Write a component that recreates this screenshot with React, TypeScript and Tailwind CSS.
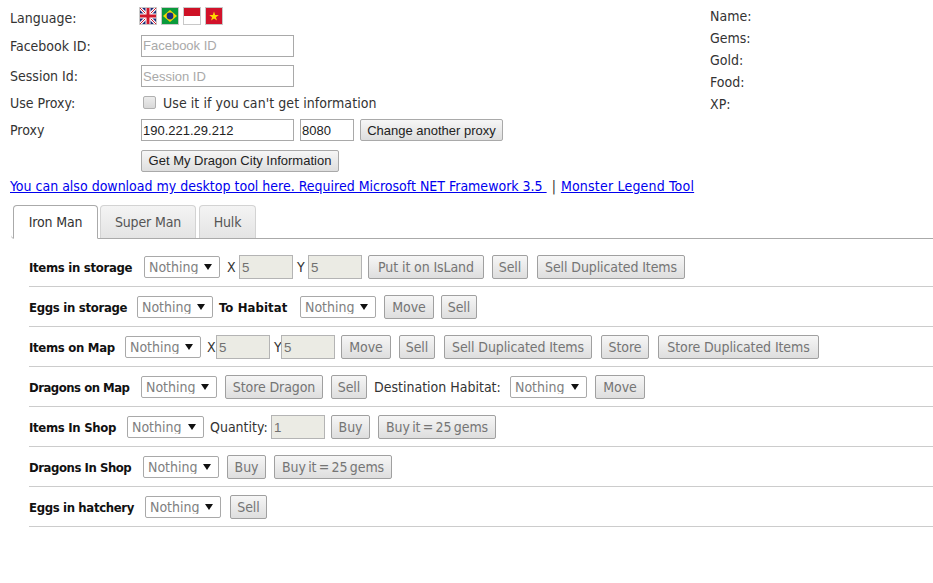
import React from 'react'

const uiFont = "font-['DejaVu_Sans',Tahoma,sans-serif] [font-stretch:condensed]"

function FlagFrame({ children, className = '' }: { children: React.ReactNode; className?: string }) {
  return (
    <span className={`block w-[18px] h-[18px] border border-[#c8c8c8] ${className}`}>
      <svg viewBox="0 0 16 16" className="block w-full h-full">{children}</svg>
    </span>
  )
}

function Flags() {
  return (
    <div className="flex gap-1 -ml-[2px] -mt-[3px]">
      <FlagFrame>
        <rect width="16" height="16" fill="#1f2a78" />
        <path d="M0 0L16 16M16 0L0 16" stroke="#fff" strokeWidth="3" />
        <path d="M0 0L16 16M16 0L0 16" stroke="#d0182c" strokeWidth="1" />
        <path d="M8 0V16M0 8H16" stroke="#fff" strokeWidth="5" />
        <path d="M8 0V16M0 8H16" stroke="#d0182c" strokeWidth="3" />
      </FlagFrame>
      <FlagFrame>
        <rect width="16" height="16" fill="#0a9a3c" />
        <path d="M8 2L15 8L8 14L1 8Z" fill="#f5d800" />
        <circle cx="8" cy="8" r="3.4" fill="#1c2f80" />
      </FlagFrame>
      <FlagFrame>
        <rect width="16" height="8" fill="#ce1126" />
        <rect y="8" width="16" height="8" fill="#fff" />
      </FlagFrame>
      <FlagFrame>
        <rect width="16" height="16" fill="#d2122b" />
        <path d="M8 3.5L9.2 7H12.8L9.9 9.2L11 12.6L8 10.5L5 12.6L6.1 9.2L3.2 7H6.8Z" fill="#ffd800" />
      </FlagFrame>
    </div>
  )
}

function TextBox({ placeholder, value, className = '' }: { placeholder?: string; value?: string; className?: string }) {
  return (
    <input
      readOnly
      placeholder={placeholder}
      defaultValue={value}
      className={`h-[22px] px-px border border-[#a9a9a9] bg-white text-[#222] placeholder:text-[#a9a9a9] font-['Liberation_Sans',Arial,sans-serif] text-[13px] outline-none ${className}`}
    />
  )
}

function DisabledBox({ value, className = '' }: { value: string; className?: string }) {
  return (
    <input
      disabled
      defaultValue={value}
      className={`w-[54px] h-[24px] px-[2px] border border-[#b4b4b4] bg-[#ebebe4] text-[#707070] font-['Liberation_Sans',Arial,sans-serif] text-[13.33px] ${className}`}
    />
  )
}

function NothingSelect({ className = '' }: { className?: string }) {
  return (
    <div className={`relative w-[76px] h-[22px] shrink-0 ${className}`}>
      <select disabled className={`${uiFont} appearance-none w-full h-full pl-[4px] border border-[#a9a9a9] rounded-[2px] bg-white text-[#808080] text-[14px] leading-none`}>
        <option>Nothing</option>
      </select>
      <svg viewBox="0 0 8 6" className="absolute right-[8px] top-[8px] w-[8px] h-[6px]">
        <path d="M0 0H8L4 6Z" fill="#111" />
      </svg>
    </div>
  )
}

function Btn({ children, className = '' }: { children: React.ReactNode; className?: string }) {
  return (
    <button disabled className={`${uiFont} h-[24px] shrink-0 border border-[#a0a0a0] rounded-[2px] bg-gradient-to-b from-[#f6f6f6] to-[#dedede] text-[#757575] text-[14px] leading-none tracking-[-0.1px] whitespace-nowrap ${className}`}>
      {children}
    </button>
  )
}

function TopBtn({ children, className = '' }: { children: React.ReactNode; className?: string }) {
  return (
    <button className={`h-[22px] border border-[#a9a9a9] rounded-[2px] bg-gradient-to-b from-[#f6f6f6] to-[#dedede] text-[#222] font-['Liberation_Sans',Arial,sans-serif] text-[13px] leading-none whitespace-nowrap ${className}`}>
      {children}
    </button>
  )
}

function Label({ children, className = 'tracking-[-0.3px]' }: { children: React.ReactNode; className?: string }) {
  return <span className={`mt-px font-bold text-[13px] text-[#111] whitespace-nowrap shrink-0 ${className}`}>{children}</span>
}

function Row({ children }: { children: React.ReactNode }) {
  return <div className="flex items-center h-[40px] pt-px border-b border-[#cccccc]">{children}</div>
}

function TopRow({ label, height, children }: { label: string; height: string; children?: React.ReactNode }) {
  return (
    <div className={`flex items-center ${height}`}>
      <span className="w-[131px] shrink-0">{label}</span>
      {children}
    </div>
  )
}

export default function App() {
  return (
    <div className={`${uiFont} w-[933px] h-[583px] overflow-hidden bg-white text-[#333] text-[14px] leading-[20px]`}>
      <div className="flex pl-[10px] pt-[5px]">
        <div className="w-[700px] shrink-0">
          <TopRow label="Language:" height="h-[25px]"><Flags /></TopRow>
          <TopRow label="Facebook ID:" height="h-[31px]">
            <TextBox placeholder="Facebook ID" className="w-[153px]" />
          </TopRow>
          <TopRow label="Session Id:" height="h-[30px]">
            <TextBox placeholder="Session ID" className="w-[153px]" />
          </TopRow>
          <TopRow label="Use Proxy:" height="h-[24px]">
            <input type="checkbox" disabled className="appearance-none ml-[2px] -mt-[2px] w-[13px] h-[13px] border border-[#b0b0b0] rounded-[2px] bg-gradient-to-b from-[#ececec] to-[#d8d8d8]" />
            <span className="ml-[7px] tracking-[0.06px]">Use it if you can't get information</span>
          </TopRow>
          <TopRow label="Proxy" height="h-[30px]">
            <TextBox value="190.221.29.212" className="w-[153px]" />
            <TextBox value="8080" className="w-[54px] ml-[6px]" />
            <TopBtn className="ml-[6px] w-[143px]">Change another proxy</TopBtn>
          </TopRow>
          <div className="pl-[131px] h-[31px] flex items-center">
            <TopBtn className="w-[198px]">Get My Dragon City Information</TopBtn>
          </div>
          <div className="h-[20px] flex items-center whitespace-pre">
            <a href="#" className="text-[#0000ee] underline">You can also download my desktop tool here. Required Microsoft NET Framework 3.5 </a>
            <span className="mx-[5px]">|</span>
            <a href="#" className="text-[#0000ee] underline tracking-[0.2px]">Monster Legend Tool</a>
          </div>
        </div>
        <div className="flex flex-col">
          {['Name:', 'Gems:', 'Gold:', 'Food:', 'XP:'].map(t => (
            <div key={t} className="h-[22px] flex items-center">{t}</div>
          ))}
        </div>
      </div>

      {/* tabs */}
      <div className="mt-[9px] ml-[11px] h-[34px] flex items-end gap-[2px] pl-[2px] border-b border-[#aaaaaa] rounded-bl-[4px] tracking-[-0.15px]">
        <div className="w-[85px] h-[34px] -mb-px flex items-center justify-center bg-white border border-b-white border-[#aaaaaa] rounded-t-[4px]">Iron Man</div>
        <div className="w-[96px] h-[33px] flex items-center justify-center border border-b-0 border-[#d3d3d3] rounded-t-[4px] bg-gradient-to-b from-[#f4f4f4] to-[#e4e4e4] text-[#555]">Super Man</div>
        <div className="w-[57px] h-[33px] ml-px flex items-center justify-center border border-b-0 border-[#d3d3d3] rounded-t-[4px] bg-gradient-to-b from-[#f4f4f4] to-[#e4e4e4] text-[#555]">Hulk</div>
      </div>

      <div className="ml-[29px] mt-[8px]">
        <Row>
          <Label className="w-[115px] tracking-[-0.3px]">Items in storage</Label>
          <NothingSelect />
          <span className="ml-[7px] w-[12px]">X</span>
          <DisabledBox value="5" />
          <span className="ml-[4px] w-[11px]">Y</span>
          <DisabledBox value="5" />
          <Btn className="ml-[6px] w-[116px]">Put it on IsLand</Btn>
          <Btn className="ml-[8px] w-[36px]">Sell</Btn>
          <Btn className="ml-[9px] w-[148px]">Sell Duplicated Items</Btn>
        </Row>
        <Row>
          <Label className="w-[108px] tracking-[-0.3px]">Eggs in storage</Label>
          <NothingSelect />
          <Label className="ml-[6px] w-[81px] tracking-[0.1px]">To Habitat</Label>
          <NothingSelect />
          <Btn className="ml-[8px] w-[50px]">Move</Btn>
          <Btn className="ml-[7px] w-[36px]">Sell</Btn>
        </Row>
        <Row>
          <Label className="w-[96px] tracking-[-0.3px]">Items on Map</Label>
          <NothingSelect />
          <span className="ml-[6px] w-[9px]">X</span>
          <DisabledBox value="5" />
          <span className="ml-[4px] w-[7px]">Y</span>
          <DisabledBox value="5" />
          <Btn className="ml-[6px] w-[50px]">Move</Btn>
          <Btn className="ml-[8px] w-[36px]">Sell</Btn>
          <Btn className="ml-[9px] w-[148px]">Sell Duplicated Items</Btn>
          <Btn className="ml-[9px] w-[48px]">Store</Btn>
          <Btn className="ml-[9px] w-[161px]">Store Duplicated Items</Btn>
        </Row>
        <Row>
          <Label className="w-[112px] tracking-[-0.5px]">Dragons on Map</Label>
          <NothingSelect />
          <Btn className="ml-[8px] w-[98px]">Store Dragon</Btn>
          <Btn className="ml-[8px] w-[36px]">Sell</Btn>
          <span className="ml-[7px] w-[136px] whitespace-nowrap">Destination Habitat:</span>
          <NothingSelect className="w-[77px]" />
          <Btn className="ml-[8px] w-[50px]">Move</Btn>
        </Row>
        <Row>
          <Label className="w-[98px] tracking-[-0.3px]">Items In Shop</Label>
          <NothingSelect className="w-[77px]" />
          <span className="ml-[6px] w-[61px]">Quantity:</span>
          <DisabledBox value="1" />
          <Btn className="ml-[6px] w-[39px]">Buy</Btn>
          <Btn className="ml-[8px] w-[118px] [word-spacing:-1.5px]">Buy it = 25 gems</Btn>
        </Row>
        <Row>
          <Label className="w-[114px] tracking-[-0.45px]">Dragons In Shop</Label>
          <NothingSelect />
          <Btn className="ml-[8px] w-[39px]">Buy</Btn>
          <Btn className="ml-[8px] w-[118px] [word-spacing:-1.5px]">Buy it = 25 gems</Btn>
        </Row>
        <Row>
          <Label className="w-[116px] tracking-[-0.35px]">Eggs in hatchery</Label>
          <NothingSelect />
          <Btn className="ml-[9px] w-[37px]">Sell</Btn>
        </Row>
      </div>
    </div>
  )
}
